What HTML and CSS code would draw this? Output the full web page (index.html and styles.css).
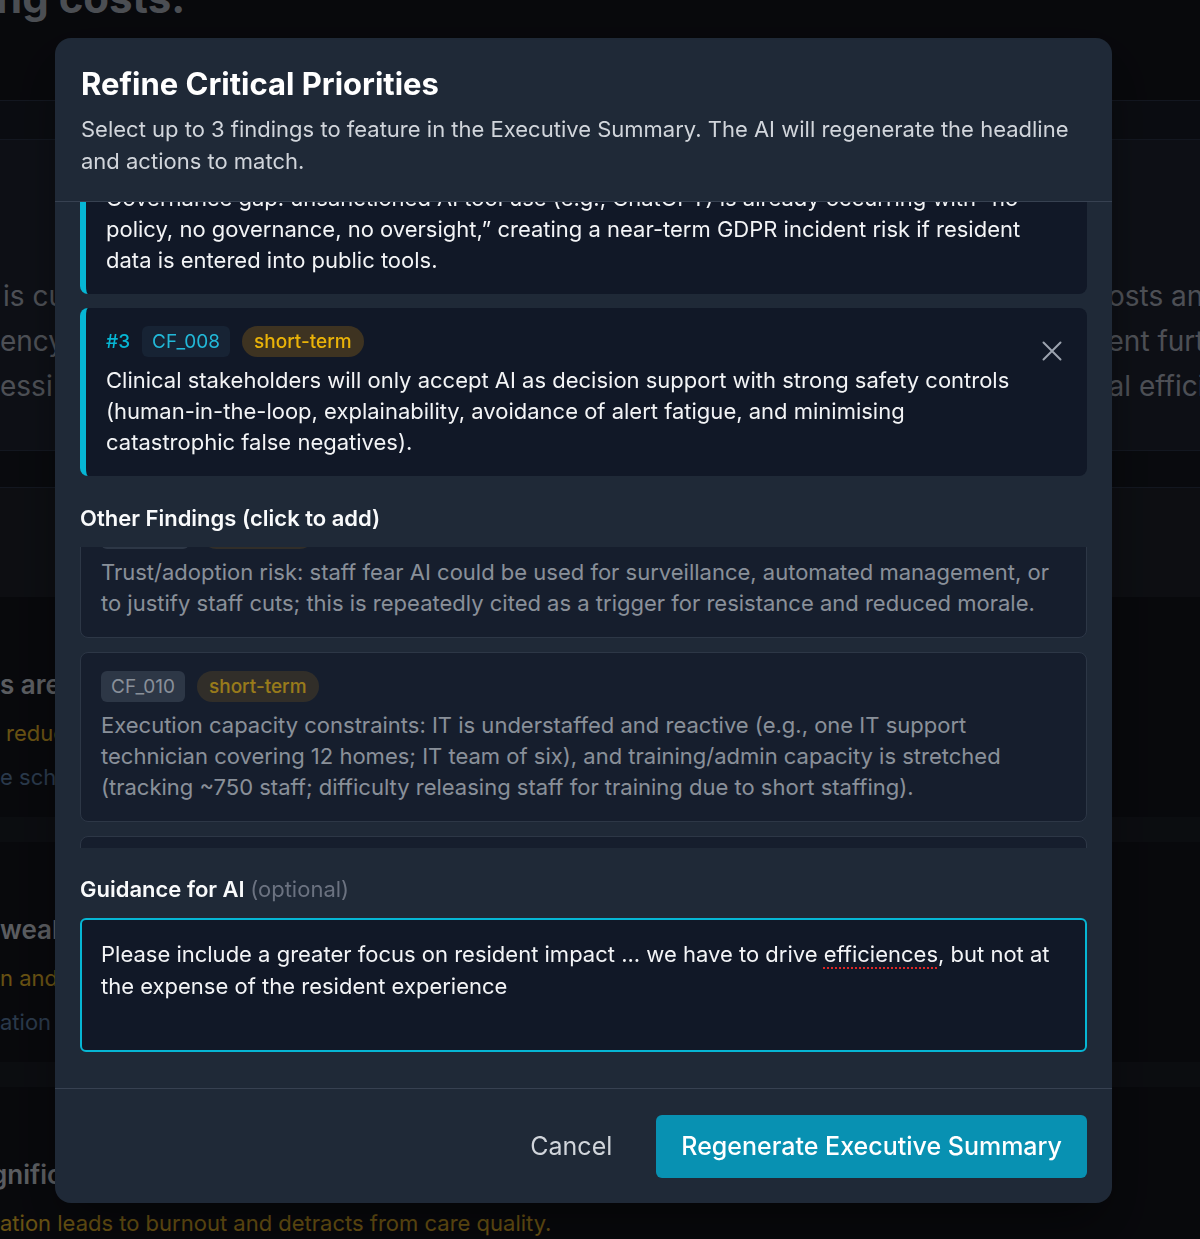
FILE: index.html
```html
<!DOCTYPE html>
<html lang="en">
<head>
<meta charset="utf-8">
<title>Refine Critical Priorities</title>
<link rel="stylesheet" href="styles.css">
</head>
<body>
<div class="page" aria-hidden="true">
  <div class="bg-head"><h1 class="bg-title">ng costs.</h1></div>
  <div class="bg-bar"></div>
  <div class="bg-panel">
    <div class="bg-row"><span class="bg-l ind3">is cu</span><span class="bg-r">costs and</span></div>
    <div class="bg-row"><span class="bg-l">ency</span><span class="bg-r r2">ment further</span></div>
    <div class="bg-row"><span class="bg-l">essi</span><span class="bg-r">nal efficiency</span></div>
  </div>
  <div class="bg-bar bar2"></div>
  <div class="bg-panel2"></div>
  <div class="bg-sec">
    <div class="bg-strong">s are the constraints</div>
    <div class="bg-yellow ind6">reducing agency spend</div>
    <div class="bg-blue">e scheduling and rotas</div>
  </div>
  <div class="bg-band"></div>
  <div class="bg-sec">
    <div class="bg-strong">weak</div>
    <div class="bg-yellow">n and retention</div>
    <div class="bg-blue">ation systems</div>
  </div>
  <div class="bg-band"></div>
  <div class="bg-sec">
    <div class="bg-strong pull">gnificant</div>
    <div class="bg-yellow">ation leads to burnout and detracts from care quality.</div>
  </div>
</div>

<div class="overlay">
  <div class="modal" role="dialog" aria-labelledby="modal-title">
    <header class="modal-head">
      <h2 id="modal-title" class="modal-title">Refine Critical Priorities</h2>
      <p class="modal-sub">Select up to 3 findings to feature in the Executive Summary. The AI will regenerate the headline and actions to match.</p>
    </header>

    <div class="modal-body">
      <div class="selected">
        <div class="sel-card">
          <div class="card-main">
            <div class="tags"><span class="rank">#1</span><span class="code">CF_002</span><span class="pill">immediate</span></div>
            <p class="card-text">Care staff spend a large share of each shift on manual documentation and handovers, reducing time available for direct resident care.</p>
          </div>
          <button class="close" aria-label="Remove"><svg viewBox="0 0 24 24" width="24" height="24"><path d="M3.5 3.5 20.5 20.5M20.5 3.5 3.5 20.5"/></svg></button>
        </div>
        <div class="sel-card">
          <div class="card-main">
            <div class="tags"><span class="rank">#2</span><span class="code">CF_005</span><span class="pill">immediate</span></div>
            <p class="card-text">Governance gap: unsanctioned AI tool use (e.g., ChatGPT) is already occurring with “no policy, no governance, no oversight,” creating a near-term GDPR incident risk if resident data is entered into public tools.</p>
          </div>
          <button class="close" aria-label="Remove"><svg viewBox="0 0 24 24" width="24" height="24"><path d="M3.5 3.5 20.5 20.5M20.5 3.5 3.5 20.5"/></svg></button>
        </div>
        <div class="sel-card">
          <div class="card-main">
            <div class="tags"><span class="rank">#3</span><span class="code">CF_008</span><span class="pill">short-term</span></div>
            <p class="card-text">Clinical stakeholders will only accept AI as decision support with strong safety controls (human-in-the-loop, explainability, avoidance of alert fatigue, and minimising catastrophic false negatives).</p>
          </div>
          <button class="close" aria-label="Remove"><svg viewBox="0 0 24 24" width="24" height="24"><path d="M3.5 3.5 20.5 20.5M20.5 3.5 3.5 20.5"/></svg></button>
        </div>
      </div>

      <h3 class="section-label other-label">Other Findings (click to add)</h3>
      <div class="other-list">
        <div class="other-scroll">
          <div class="other-card">
            <div class="tags"><span class="code">CF_009</span><span class="pill">long-term</span></div>
            <p class="card-text">Trust/adoption risk: staff fear AI could be used for surveillance, automated management, or to justify staff cuts; this is repeatedly cited as a trigger for resistance and reduced morale.</p>
          </div>
          <div class="other-card">
            <div class="tags"><span class="code">CF_010</span><span class="pill">short-term</span></div>
            <p class="card-text">Execution capacity constraints: IT is understaffed and reactive (e.g., one IT support technician covering 12 homes; IT team of six), and training/admin capacity is stretched (tracking ~750 staff; difficulty releasing staff for training due to short staffing).</p>
          </div>
          <div class="other-card">
            <div class="tags"><span class="code">CF_011</span><span class="pill">short-term</span></div>
            <p class="card-text">Data quality and fragmentation across care records limit the reliability of any AI-driven insight.</p>
          </div>
        </div>
      </div>

      <div class="section-label guide-label">Guidance for AI <span class="optional">(optional)</span></div>
      <div class="textarea" role="textbox" aria-multiline="true">Please include a greater focus on resident impact ... we have to drive <span class="misspelt">efficiences</span>, but not at the expense of the resident experience</div>
    </div>

    <footer class="modal-foot">
      <button class="btn-cancel">Cancel</button>
      <button class="btn-primary">Regenerate Executive Summary</button>
    </footer>
  </div>
</div>
</body>
</html>
```

FILE: styles.css
```css
* { box-sizing: border-box; }

html, body {
  margin: 0;
  padding: 0;
}

body {
  width: 1200px;
  height: 1239px;
  overflow: hidden;
  background: #12141b;
  font-family: "Inter", "Noto Sans", "Liberation Sans", sans-serif;
  color: #f3f4f6;
}

/* ---------- background page ---------- */
.page {
  width: 1200px;
  height: 1239px;
  overflow: hidden;
  white-space: nowrap;
}

.bg-head {
  display: flow-root;
  height: 100px;
}

.bg-title {
  margin: -27px 0 0 -4px;
  font-size: 42px;
  line-height: 50px;
  font-weight: 700;
  color: #a7adb8;
}

.bg-bar {
  height: 40px;
  border-top: 1px solid #2b3447;
  border-bottom: 1px solid #2b3447;
  background: #181c26;
}

.bg-bar.bar2 {
  height: 38px;
  background: #14171f;
}

.bg-panel {
  height: 310px;
  padding-top: 134px;
  background: #1e2330;
}

.bg-row {
  display: flex;
  height: 45px;
  font-size: 28px;
  line-height: 45px;
  color: #aab0bd;
}

.bg-l.ind3 { padding-left: 3px; }

.bg-r {
  margin-left: auto;
  width: 108px;
  overflow: hidden;
}

.bg-r.r2 { width: 117px; }

.bg-panel2 {
  height: 109px;
  background: #1d2029;
}

.bg-sec {
  height: 220px;
  padding-top: 70px;
}

.bg-band {
  height: 25px;
  background: #1a1d25;
}

.bg-strong {
  font-size: 26px;
  line-height: 36px;
  font-weight: 600;
  color: #c8cdd6;
}

.bg-strong.pull { margin-left: -9px; }

.bg-yellow {
  margin-top: 8px;
  font-size: 22px;
  line-height: 44px;
  color: #e6b52a;
}

.bg-blue {
  font-size: 22px;
  line-height: 44px;
  color: #5d7ea6;
}

.ind6 { padding-left: 6px; }

/* ---------- overlay + modal ---------- */
.overlay {
  position: fixed;
  inset: 0;
  background: rgba(0, 0, 0, 0.55);
  display: flex;
  align-items: center;
  justify-content: center;
  padding: 2px 33px 0 0;
}

.modal {
  width: 1057px;
  height: 1165px;
  background: #1f2937;
  border-radius: 16px;
  display: flex;
  flex-direction: column;
  overflow: hidden;
  box-shadow: 0 25px 50px -12px rgba(0, 0, 0, 0.5);
}

.modal-head {
  flex-shrink: 0;
  padding: 26px 26px 24px;
  border-bottom: 1px solid #374151;
}

.modal-title {
  margin: 0;
  font-size: 31px;
  line-height: 40px;
  font-weight: 700;
  color: #ffffff;
}

.modal-sub {
  margin: 9px 0 0;
  font-size: 22px;
  line-height: 32px;
  color: #d1d5db;
}

.modal-body {
  flex: 1;
  min-height: 0;
  overflow: hidden;
  display: flex;
  flex-direction: column;
  justify-content: flex-end;
  padding: 0 25px 36px;
}

.modal-body > * { flex-shrink: 0; }

.selected {
  display: flex;
  flex-direction: column;
  gap: 14px;
}

.sel-card {
  display: flex;
  align-items: flex-start;
  gap: 14px;
  background: #111827;
  border-left: 6px solid #06b6d4;
  border-radius: 8px;
  padding: 18px 20px;
}

.card-main {
  flex: 1;
  min-width: 0;
}

.tags {
  display: flex;
  align-items: center;
  gap: 12px;
  height: 31px;
}

.rank {
  font-size: 19px;
  line-height: 31px;
  font-weight: 500;
  color: #06b6d4;
}

.code {
  font-size: 19px;
  line-height: 23px;
  padding: 4px 10px;
  border-radius: 6px;
  background: #172334;
  color: #22b8d8;
}

.pill {
  font-size: 19px;
  line-height: 23px;
  padding: 4px 12px;
  border-radius: 999px;
  background: rgba(245, 158, 11, 0.2);
  color: #eab308;
  font-weight: 500;
}

.card-text {
  margin: 8px 0 0;
  font-size: 22px;
  line-height: 31px;
  color: #f3f4f6;
}

.close {
  flex-shrink: 0;
  width: 30px;
  height: 30px;
  margin-top: 10px;
  padding: 0;
  border: 0;
  background: transparent;
  display: flex;
  align-items: center;
  justify-content: center;
  cursor: pointer;
}

.close svg path {
  fill: none;
  stroke: #9ca3af;
  stroke-width: 2;
  stroke-linecap: round;
}

.section-label {
  margin: 0;
  font-size: 22px;
  line-height: 32px;
  font-weight: 600;
  color: #f9fafb;
}

.other-label { margin-top: 26px; }

.other-list {
  margin-top: 13px;
  height: 301px;
  overflow: hidden;
}

.other-scroll {
  margin-top: -48px;
  display: flex;
  flex-direction: column;
  gap: 14px;
}

.other-card {
  background: #111827;
  border: 1px solid #374151;
  border-radius: 8px;
  padding: 18px 20px;
  opacity: 0.6;
  cursor: pointer;
}

.other-card .code {
  background: #374151;
  color: #d1d5db;
}

.other-card .card-text { color: #d1d5db; }

.guide-label { margin-top: 25px; }

.optional {
  font-weight: 400;
  color: #6b7280;
}

.textarea {
  margin-top: 13px;
  height: 134px;
  padding: 18px 19px 16px;
  background: #111827;
  border: 2px solid #06b6d4;
  border-radius: 6px;
  font-size: 22px;
  line-height: 32px;
  color: #f3f4f6;
}

.misspelt {
  text-decoration: underline dotted #dc2626;
  text-decoration-thickness: 2px;
  text-underline-offset: 5px;
}

.modal-foot {
  flex-shrink: 0;
  display: flex;
  justify-content: flex-end;
  align-items: center;
  gap: 24px;
  padding: 26px 25px 25px;
  border-top: 1px solid #374151;
}

.btn-cancel,
.btn-primary {
  font-family: inherit;
  font-size: 25px;
  line-height: 31px;
  padding: 16px 25px;
  border: 0;
  border-radius: 6px;
  cursor: pointer;
}

.btn-cancel {
  padding: 16px 20px;
  background: transparent;
  color: #d1d5db;
}

.btn-primary {
  background: #0891b2;
  color: #ffffff;
  font-weight: 500;
}
```
